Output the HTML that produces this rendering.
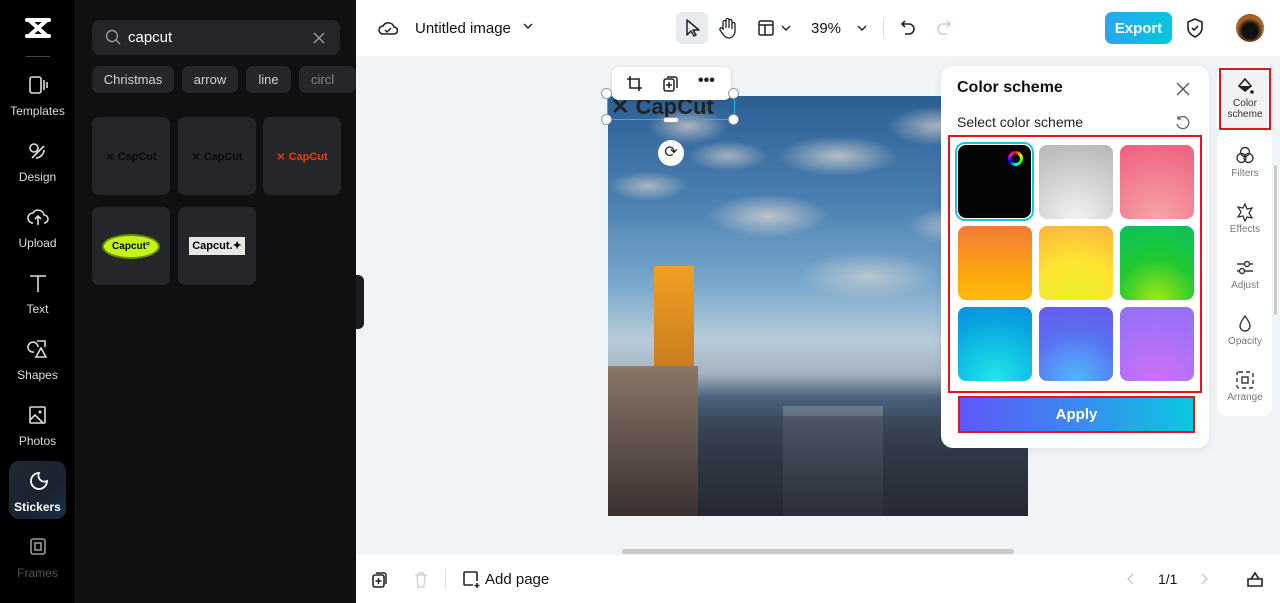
<!DOCTYPE html>
<html><head><meta charset="utf-8"><style>
*{margin:0;padding:0;box-sizing:border-box}
body{width:1280px;height:603px;overflow:hidden;font-family:"Liberation Sans",sans-serif;background:#f1f4f7;position:relative}
.abs{position:absolute}
.side{left:0;top:0;width:76px;height:603px;background:#000;border-right:1px solid #1a1a1a}
.nav{position:absolute;left:0;width:75px;text-align:center;color:#ddd;font-size:12px}
.nav svg{display:block;margin:0 auto 9px}
.panel{left:76px;top:0;width:280px;height:603px;background:#0f1012}
.chip{position:absolute;top:66px;height:27px;background:#25262a;border-radius:7px;color:#cfd0d3;font-size:13px;line-height:27px;text-align:center}
.tile{position:absolute;width:78px;height:78px;background:#25262a;border-radius:7px;display:flex;align-items:center;justify-content:center;font-size:11px}
.top{left:356px;top:0;width:924px;height:56px;background:#fff}
.bot{left:356px;top:555px;width:924px;height:48px;background:#fff}
.sw{position:absolute;width:74px;height:74px;border-radius:8px}
.rp{position:absolute;left:1218px;width:54px;text-align:center;font-size:10px;color:#777}
.rp svg{display:block;margin:0 auto 2px}
</style></head><body>
<div class="abs side">
 <svg class="abs" style="left:25px;top:17px" width="26" height="22" viewBox="0 0 26 22"><path d="M2 3h22M2 19h22M4 3l18 16M22 3L4 19" stroke="#fff" stroke-width="4" fill="none" stroke-linecap="round"/></svg>
 <div class="abs" style="left:26px;top:56px;width:24px;height:1px;background:#444"></div>
 <div class="nav" style="top:75px"><svg width="22" height="20"><rect x="3" y="2" width="11" height="16" rx="2" stroke="#ddd" stroke-width="1.6" fill="none"/><path d="M17 5v10M20 7v6" stroke="#ddd" stroke-width="1.6"/></svg>Templates</div>
 <div class="nav" style="top:141px"><svg width="22" height="20"><circle cx="7" cy="7" r="4" stroke="#ddd" stroke-width="1.6" fill="none"/><path d="M5 17l12-12M9 17c4 0 8-4 8-8" stroke="#ddd" stroke-width="1.6" fill="none"/></svg>Design</div>
 <div class="nav" style="top:207px"><svg width="22" height="20"><path d="M6 16a5 5 0 010-10 6 6 0 0111 2 4 4 0 010 8M11 18v-8M8 12l3-3 3 3" stroke="#ddd" stroke-width="1.6" fill="none"/></svg>Upload</div>
 <div class="nav" style="top:273px"><svg width="22" height="20"><path d="M3 3h16M11 3v16" stroke="#ddd" stroke-width="1.6"/></svg>Text</div>
 <div class="nav" style="top:339px"><svg width="22" height="20"><path d="M11 8a5 5 0 10-4 5M9 18l5-9 5 9z M10 2h8v6" stroke="#ddd" stroke-width="1.6" fill="none"/></svg>Shapes</div>
 <div class="nav" style="top:405px"><svg width="22" height="20"><rect x="3" y="2" width="15" height="16" rx="1" stroke="#ddd" stroke-width="1.6" fill="none"/><path d="M3 15l5-5 8 8" stroke="#ddd" stroke-width="1.6" fill="none"/><circle cx="13" cy="7" r="1.5" fill="#ddd"/></svg>Photos</div>
 <div class="abs" style="left:9px;top:461px;width:57px;height:58px;border-radius:10px;background:linear-gradient(135deg,#202833,#1a2330 60%,#143048)"></div>
 <div class="nav" style="top:471px;color:#fff;font-weight:bold"><svg width="22" height="20"><path d="M12 2a8 8 0 108 8 6 6 0 01-8-8z" stroke="#fff" stroke-width="1.8" fill="none"/></svg>Stickers</div>
 <div class="nav" style="top:537px;color:#555"><svg width="22" height="20"><rect x="4" y="2" width="14" height="15" rx="2" stroke="#999" stroke-width="1.6" fill="none"/><rect x="8" y="6" width="6" height="7" stroke="#999" stroke-width="1.6" fill="none"/></svg>Frames</div>
</div>
<div class="abs panel">
 <div class="abs" style="left:16px;top:20px;width:248px;height:35px;background:#25262a;border-radius:8px"></div>
 <svg class="abs" style="left:29px;top:29px" width="16" height="16"><circle cx="7" cy="7" r="5.5" stroke="#999" stroke-width="1.4" fill="none"/><path d="M11 11l4 4" stroke="#999" stroke-width="1.4"/></svg>
 <div class="abs" style="left:52px;top:29px;color:#fff;font-size:15px">capcut</div>
 <svg class="abs" style="left:237px;top:32px" width="12" height="12"><path d="M1 1l10 10M11 1L1 11" stroke="#999" stroke-width="1.4"/></svg>
 <div class="chip" style="left:16px;width:82px">Christmas</div>
 <div class="chip" style="left:106px;width:56px">arrow</div>
 <div class="chip" style="left:170px;width:45px">line</div>
 <div class="chip" style="left:223px;width:57px;text-align:left;padding-left:12px;color:#888">circl</div>
 <div class="tile" style="left:16px;top:117px;color:#0a0a0a"><b style="font-size:11px">⨯ CapCut</b></div>
 <div class="tile" style="left:102px;top:117px;color:#0a0a0a"><b>⨯ CapCut</b></div>
 <div class="tile" style="left:187px;top:117px;color:#ef3a16"><b>⨯ CapCut</b></div>
 <div class="tile" style="left:16px;top:207px"><div style="width:58px;height:25px;border-radius:50%;background:#c4f31a;border:2px solid #6a8c00;font-size:10px;font-weight:bold;color:#000;text-align:center;line-height:21px">Capcut°</div></div>
 <div class="tile" style="left:102px;top:207px"><div style="width:56px;height:18px;background:#e6e6e6;font-size:11px;font-weight:bold;color:#000;text-align:center;line-height:18px">Capcut.✦</div></div>
</div>
<div class="abs" style="left:356px;top:275px;width:8px;height:54px;background:#1c1d20;border-radius:0 6px 6px 0"></div>
<div class="abs top">
 <svg class="abs" style="left:22px;top:18px" width="20" height="20"><path d="M5 16a4 4 0 010-8 6 6 0 0111 1 3.5 3.5 0 010 7z" stroke="#222" stroke-width="1.6" fill="none"/><path d="M7 12l2 2 4-4" stroke="#222" stroke-width="1.5" fill="none"/></svg>
 <div class="abs" style="left:59px;top:20px;font-size:15px;color:#111">Untitled image</div>
 <svg class="abs" style="left:167px;top:23px" width="10" height="8"><path d="M1 1l4 4 4-4" stroke="#222" stroke-width="1.5" fill="none"/></svg>
 <div class="abs" style="left:320px;top:12px;width:32px;height:32px;background:#e8ecf0;border-radius:6px"></div>
 <svg class="abs" style="left:327px;top:18px" width="18" height="20"><path d="M4 2v15l4-4 3 5 2-1-3-5h6z" stroke="#222" stroke-width="1.5" fill="none" stroke-linejoin="round"/></svg>
 <svg class="abs" style="left:362px;top:17px" width="18" height="22"><path d="M5 12V5a1.5 1.5 0 013 0v6V3a1.5 1.5 0 013 0v8V4a1.5 1.5 0 013 0v8V7a1.5 1.5 0 013 0v7c0 4-3 7-6 7s-5-2-7-5l-2-3a1.5 1.5 0 012-2z" stroke="#222" stroke-width="1.3" fill="none"/></svg>
 <svg class="abs" style="left:402px;top:20px" width="16" height="16"><rect x="1" y="1" width="14" height="14" rx="1.5" stroke="#222" stroke-width="1.5" fill="none"/><path d="M1 5h14M7 5v10" stroke="#222" stroke-width="1.5"/></svg>
 <svg class="abs" style="left:425px;top:25px" width="10" height="7"><path d="M1 1l4 4 4-4" stroke="#222" stroke-width="1.4" fill="none"/></svg>
 <div class="abs" style="left:455px;top:20px;font-size:15px;color:#111">39%</div>
 <svg class="abs" style="left:501px;top:25px" width="10" height="7"><path d="M1 1l4 4 4-4" stroke="#222" stroke-width="1.4" fill="none"/></svg>
 <div class="abs" style="left:527px;top:18px;width:1px;height:20px;background:#ddd"></div>
 <svg class="abs" style="left:544px;top:19px" width="16" height="18"><path d="M5 2L2 5l3 3M2 5h7a5 5 0 010 10H5" stroke="#222" stroke-width="1.6" fill="none"/></svg>
 <svg class="abs" style="left:580px;top:19px" width="16" height="18"><path d="M11 2l3 3-3 3M14 5H7a5 5 0 000 10h4" stroke="#ccd" stroke-width="1.6" fill="none"/></svg>
 <div class="abs" style="left:749px;top:12px;width:67px;height:32px;border-radius:7px;background:linear-gradient(90deg,#2aa6ee,#04c6de);color:#fff;font-weight:bold;font-size:15px;text-align:center;padding-top:8px">Export</div>
 <svg class="abs" style="left:830px;top:18px" width="18" height="20"><path d="M9 1l7 3v6c0 4-3 7-7 9-4-2-7-5-7-9V4z" stroke="#222" stroke-width="1.6" fill="none"/><path d="M6 10l2 2 4-4" stroke="#222" stroke-width="1.6" fill="none"/></svg>
 <div class="abs" style="left:880px;top:14px;width:28px;height:28px;border-radius:50%;background:radial-gradient(circle at 50% 60%,#111 35%,#b26a25 60%,#6a3a12)"></div>
</div>
<!-- image -->
<div class="abs" style="left:608px;top:96px;width:420px;height:420px;overflow:hidden;background:linear-gradient(180deg,#2d5f95 0%,#4b80b2 25%,#7aa8cc 45%,#b7cbd8 58%,#a6b4c0 66%,#48607a 72%,#2a3544 85%,#1c2430 100%)">
 <div class="abs" style="left:0;top:0;width:420px;height:220px;background:radial-gradient(ellipse 40px 18px at 80px 30px,#e8dcd0aa,transparent),radial-gradient(ellipse 60px 20px at 230px 60px,#efe4d6aa,transparent),radial-gradient(ellipse 50px 20px at 330px 30px,#e8dcd0aa,transparent),radial-gradient(ellipse 60px 22px at 160px 120px,#efe4d6aa,transparent),radial-gradient(ellipse 50px 20px at 350px 130px,#e8dcd0aa,transparent),radial-gradient(ellipse 70px 25px at 260px 180px,#efe4d688,transparent),radial-gradient(ellipse 40px 15px at 40px 90px,#e8dcd099,transparent),radial-gradient(ellipse 40px 15px at 120px 60px,#e8dcd099,transparent)"></div>
 <div class="abs" style="left:46px;top:170px;width:40px;height:250px;background:linear-gradient(180deg,#f0a020,#c97d20 40%,#5a4a40 60%,#302c30)"></div>
 <div class="abs" style="left:0;top:270px;width:90px;height:150px;background:linear-gradient(180deg,#8a7868,#3a3030)"></div>
 <div class="abs" style="left:175px;top:310px;width:100px;height:110px;background:linear-gradient(180deg,#6a7888,#2a3340)"></div>
 <div class="abs" style="left:90px;top:320px;width:330px;height:100px;background:linear-gradient(180deg,#3a4656,#2a2a30);opacity:.6"></div>
</div>
<div class="abs" style="left:607px;top:96px;width:128px;height:24px;border:1.5px solid #10c0d8;font-weight:bold;font-size:22px;color:#222;line-height:20px;padding-left:3px">✕ CapCut</div>
<div class="abs" style="left:612px;top:67px;width:119px;height:33px;background:#fff;border-radius:7px;box-shadow:0 1px 4px rgba(0,0,0,.15)"></div>
<svg class="abs" style="left:626px;top:75px" width="16" height="18"><path d="M4 1v12h12M1 4h12v12" stroke="#222" stroke-width="1.6" fill="none"/></svg>
<svg class="abs" style="left:662px;top:75px" width="16" height="18"><rect x="2" y="4" width="10" height="12" rx="2" stroke="#222" stroke-width="1.5" fill="none"/><path d="M5 2h8a2 2 0 012 2v9M7 7v6M4 10h6" stroke="#222" stroke-width="1.5" fill="none"/></svg>
<div class="abs" style="left:698px;top:72px;font-size:16px;font-weight:bold;color:#222">•••</div>
<div class="abs" style="left:601px;top:114px;width:11px;height:11px;border-radius:50%;background:#fff;border:1px solid #999"></div>
<div class="abs" style="left:728px;top:114px;width:11px;height:11px;border-radius:50%;background:#fff;border:1px solid #999"></div>
<div class="abs" style="left:601px;top:88px;width:11px;height:11px;border-radius:50%;background:#fff;border:1px solid #999"></div>
<div class="abs" style="left:728px;top:88px;width:11px;height:11px;border-radius:50%;background:#fff;border:1px solid #999"></div>
<div class="abs" style="left:663px;top:117px;width:16px;height:6px;border-radius:3px;background:#fff;border:1px solid #999"></div>
<div class="abs" style="left:658px;top:140px;width:26px;height:26px;border-radius:50%;background:#fff;font-size:16px;text-align:center;line-height:26px;color:#222">⟳</div>
<!-- popup -->
<div class="abs" style="left:941px;top:66px;width:268px;height:382px;background:#fff;border-radius:12px;box-shadow:0 2px 10px rgba(0,0,0,.08)"></div>
<div class="abs" style="left:957px;top:79px;font-size:16px;font-weight:bold;color:#111">Color scheme</div>
<svg class="abs" style="left:1176px;top:82px" width="14" height="14"><path d="M1 1l12 12M13 1L1 13" stroke="#555" stroke-width="1.4"/></svg>
<div class="abs" style="left:957px;top:114px;font-size:14px;color:#222">Select color scheme</div>
<svg class="abs" style="left:1175px;top:115px" width="15" height="15"><path d="M3 4a6 6 0 11-1 5M3 1v3h3" stroke="#666" stroke-width="1.3" fill="none"/></svg>
<div class="abs" style="left:948px;top:135px;width:254px;height:258px;border:2px solid #e2151f"></div>
<div class="abs" style="left:955px;top:142px;width:79px;height:79px;border:2px solid #1cc4dc;border-radius:10px"></div>
<div class="sw" style="left:958px;top:145px;width:73px;height:73px;background:#050505"></div>
<div class="abs" style="left:1008px;top:151px;width:15px;height:15px;border-radius:50%;background:conic-gradient(red,yellow,lime,cyan,blue,magenta,red)"><div style="margin:3px;width:9px;height:9px;border-radius:50%;background:#050505"></div></div>
<div class="sw" style="left:1039px;top:145px;background:radial-gradient(circle at 50% 100%,#f2f2f2,#b5b5b5)"></div>
<div class="sw" style="left:1120px;top:145px;background:radial-gradient(circle at 50% 100%,#f5a5a5,#ee5e80)"></div>
<div class="sw" style="left:958px;top:226px;background:linear-gradient(180deg,#f47a38,#fbaa0a 70%,#fcba10)"></div>
<div class="sw" style="left:1039px;top:226px;background:radial-gradient(circle at 50% 100%,#e8f02a,#fde430 50%,#fbb040)"></div>
<div class="sw" style="left:1120px;top:226px;background:radial-gradient(circle at 50% 100%,#a0e818,#20c830 50%,#08c060)"></div>
<div class="sw" style="left:958px;top:307px;background:radial-gradient(circle at 50% 100%,#20e8e8,#08a8e0 70%,#0890e0)"></div>
<div class="sw" style="left:1039px;top:307px;background:radial-gradient(circle at 50% 100%,#50b8ff,#5a70f0 60%,#6a58f0)"></div>
<div class="sw" style="left:1120px;top:307px;background:radial-gradient(circle at 50% 100%,#d070f8,#a870f8 60%,#9070f0)"></div>
<div class="abs" style="left:958px;top:396px;width:237px;height:37px;border:2px solid #e2151f;background:linear-gradient(90deg,#6058f8,#3a8af0 50%,#08c8e0);color:#fff;font-weight:bold;font-size:15px;text-align:center;line-height:33px">Apply</div>
<!-- right panel -->
<div class="abs" style="left:1217px;top:66px;width:55px;height:350px;background:#fff;border-radius:10px"></div>
<div class="abs" style="left:1219px;top:68px;width:52px;height:62px;border:2px solid #e2151f;background:#f0f2f4"></div>
<div class="rp" style="top:76px;color:#333"><svg width="20" height="20"><path d="M4 10l6-7 6 7-6 5z" stroke="#222" stroke-width="1.6" fill="none"/><path d="M4 10h12l-6 5z" fill="#222"/><circle cx="17" cy="16" r="1.8" fill="#222"/></svg>Color<br>scheme</div>
<div class="rp" style="top:146px"><svg width="20" height="20"><circle cx="10" cy="6" r="4.5" stroke="#333" stroke-width="1.4" fill="none"/><circle cx="6.5" cy="12" r="4.5" stroke="#333" stroke-width="1.4" fill="none"/><circle cx="13.5" cy="12" r="4.5" stroke="#333" stroke-width="1.4" fill="none"/></svg>Filters</div>
<div class="rp" style="top:202px"><svg width="20" height="20"><path d="M10 2l2 5 5-1-3 5 3 5-5-1-2 4-2-5-5 1 3-5-3-5 5 1z" stroke="#333" stroke-width="1.3" fill="none"/></svg>Effects</div>
<div class="rp" style="top:258px"><svg width="20" height="20"><path d="M2 6h16M2 13h16" stroke="#333" stroke-width="1.4"/><circle cx="12" cy="6" r="2.5" fill="#fff" stroke="#333" stroke-width="1.4"/><circle cx="7" cy="13" r="2.5" fill="#fff" stroke="#333" stroke-width="1.4"/></svg>Adjust</div>
<div class="rp" style="top:314px"><svg width="20" height="20"><path d="M10 2c3 4 5 7 5 10a5 5 0 01-10 0c0-3 2-6 5-10z" stroke="#333" stroke-width="1.4" fill="none"/></svg>Opacity</div>
<div class="rp" style="top:370px"><svg width="20" height="20"><rect x="2" y="2" width="16" height="16" rx="2" stroke="#333" stroke-width="1.4" fill="none" stroke-dasharray="4 3"/><rect x="7" y="7" width="6" height="6" stroke="#333" stroke-width="1.4" fill="none"/></svg>Arrange</div>
<div class="abs" style="left:1274px;top:165px;width:3px;height:150px;background:#ccc;border-radius:2px"></div>
<div class="abs" style="left:622px;top:549px;width:392px;height:5px;background:#c8c8c8;border-radius:3px"></div>
<!-- bottom -->
<div class="abs bot">
 <svg class="abs" style="left:16px;top:16px" width="16" height="17"><rect x="1" y="4" width="11" height="12" rx="2" stroke="#222" stroke-width="1.6" fill="none"/><path d="M4 2h8a2 2 0 012 2v9M6.5 7v6M3.5 10h6" stroke="#222" stroke-width="1.5" fill="none"/></svg>
 <svg class="abs" style="left:57px;top:16px" width="16" height="17"><path d="M2 4h12M4 4l1 12h6l1-12M6 4V2h4v2" stroke="#ccd3db" stroke-width="1.5" fill="none"/></svg>
 <div class="abs" style="left:89px;top:14px;width:1px;height:20px;background:#ddd"></div>
 <svg class="abs" style="left:106px;top:15px" width="18" height="19"><path d="M11 15H3a1 1 0 01-1-1V3a1 1 0 011-1h11a1 1 0 011 1v8M15 13v5M12.5 15.5h5" stroke="#222" stroke-width="1.6" fill="none"/></svg>
 <div class="abs" style="left:129px;top:16px;font-size:15px;color:#111">Add page</div>
 <svg class="abs" style="left:770px;top:18px" width="8" height="12"><path d="M7 1L2 6l5 5" stroke="#ccc" stroke-width="1.5" fill="none"/></svg>
 <div class="abs" style="left:802px;top:16px;font-size:14px;color:#111">1/1</div>
 <svg class="abs" style="left:845px;top:18px" width="8" height="12"><path d="M1 1l5 5-5 5" stroke="#ccc" stroke-width="1.5" fill="none"/></svg>
 <svg class="abs" style="left:890px;top:15px" width="18" height="18"><path d="M2 9h14v7H2zM5 9l4-6 4 6" stroke="#222" stroke-width="1.6" fill="none"/></svg>
</div>
</body></html>
